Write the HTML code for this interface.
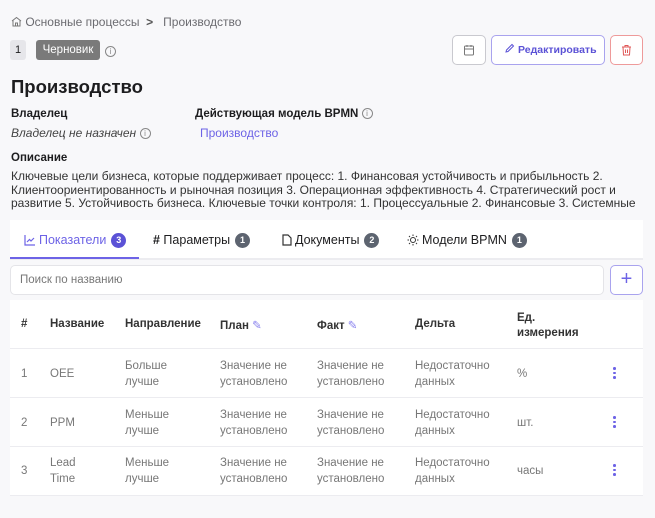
<!DOCTYPE html>
<html><head><meta charset="utf-8"><style>
*{box-sizing:border-box;margin:0;padding:0}
body{width:655px;height:518px;background:#f8f8fa;font-family:"Liberation Sans",sans-serif;color:#1d1d1f;position:relative;overflow:hidden;font-size:12px}
.a{position:absolute;white-space:nowrap}
.g{color:#6b6b70}
.info{display:inline-block;width:11px;height:11px;border:1px solid #888;border-radius:50%;font-size:8px;line-height:9px;text-align:center;color:#888;vertical-align:middle}
.btn{position:absolute;top:35px;height:30px;border-radius:5px;background:#fff}
.badge{display:inline-block;width:15px;height:15px;border-radius:50%;background:#5d6470;color:#fff;font-size:9px;line-height:15px;text-align:center;font-weight:bold;vertical-align:middle;margin-left:5px}
.tab{top:232px;font-size:12.5px;line-height:16px}
.tab svg{vertical-align:-2px;margin-right:3px}
.th{font-weight:bold;font-size:11.5px;color:#333}
.td{color:#777;font-size:11.5px;line-height:16px}
.sep{position:absolute;left:10px;width:633px;height:1px;background:#ececf0}
.dots{position:absolute;left:613px;width:3px}
.dots i{display:block;width:2.5px;height:2.5px;background:#6d63e6;border-radius:50%;margin-bottom:2px}
</style></head><body>
<div class="a g" style="left:11px;top:15px;font-size:12px"><svg width="11" height="11" viewBox="0 0 11 11" style="vertical-align:-1px"><path d="M1 5 L5.5 1.5 L10 5 M2 4.5 V10 H9 V4.5 M4.5 10 V7 H6.5 V10" fill="none" stroke="#777" stroke-width="1"/></svg> Основные процессы &nbsp;<b style="color:#555">&gt;</b>&nbsp;&nbsp; Производство</div>
<div class="a" style="left:10px;top:40px;width:16px;height:20px;background:#e6e6ea;border-radius:3px;font-size:11px;text-align:center;line-height:20px">1</div>
<div class="a" style="left:36px;top:40px;width:64px;height:20px;background:#7a7a7a;border-radius:3px;color:#fff;font-size:11.5px;line-height:20px;text-align:center">Черновик</div>
<div class="a" style="left:105px;top:44px"><span class="info">i</span></div>
<div class="btn" style="left:452px;width:34px;border:1px solid #c9c9cf"><svg width="12" height="12" viewBox="0 0 12 12" style="position:absolute;left:10px;top:8px"><rect x="1.5" y="2" width="9" height="9" rx="1" fill="none" stroke="#777"/><path d="M1.5 5H10.5M4 1V3M8 1V3" stroke="#777"/></svg></div>
<div class="btn" style="left:491px;width:114px;border:1px solid #a9a3ee;color:#5b52d6;font-size:10.5px;font-weight:bold;line-height:28px;padding-left:12px"><svg width="11" height="11" viewBox="0 0 11 11" style="vertical-align:-1px;margin-right:3px"><path d="M2 9L2.5 7L8 1.5L9.5 3L4 8.5Z" fill="none" stroke="#5b52d6"/></svg>Редактировать</div>
<div class="btn" style="left:610px;width:33px;border:1px solid #ee9a9a"><svg width="11" height="12" viewBox="0 0 11 12" style="position:absolute;left:10px;top:8px"><path d="M1 3H10M4 3V1.5H7V3M2 3L2.5 11H8.5L9 3M4.5 5.5V9M6.5 5.5V9" fill="none" stroke="#e05858"/></svg></div>
<div class="a" style="left:11px;top:76px;font-size:18.5px;font-weight:bold">Производство</div>
<div class="a th" style="left:11px;top:108px;color:#1d1d1f">Владелец</div>
<div class="a" style="left:11px;top:126px;font-style:italic;color:#444">Владелец не назначен <span class="info" style="font-style:normal">i</span></div>
<div class="a th" style="left:195px;top:108px;color:#1d1d1f">Действующая модель BPMN <span class="info" style="font-weight:normal">i</span></div>
<div class="a" style="left:200px;top:126px;color:#6d63e6">Производство</div>
<div class="a th" style="left:11px;top:152px;color:#1d1d1f">Описание</div>
<div class="a" style="left:11px;top:170px;line-height:13.5px;font-size:12px;color:#333">Ключевые цели бизнеса, которые поддерживает процесс: 1. Финансовая устойчивость и прибыльность 2.<br>Клиентоориентированность и рыночная позиция 3. Операционная эффективность 4. Стратегический рост и<br>развитие 5. Устойчивость бизнеса. Ключевые точки контроля: 1. Процессуальные 2. Финансовые 3. Системные</div>
<div class="a" style="left:10px;top:220px;width:633px;height:40px;background:#fff;border-bottom:2px solid #ececf0"></div>
<div class="a" style="left:10px;top:257px;width:129px;height:2px;background:#6d63e6"></div>
<div class="a tab" style="left:24px;color:#6d63e6"><svg width="12" height="12" viewBox="0 0 12 12"><path d="M1 1V11H11M3 8L5.5 5.5L7 7L10 4" fill="none" stroke="#6d63e6" stroke-width="1.2"/></svg>Показатели<span class="badge" style="background:#5b52d6">3</span></div>
<div class="a tab" style="left:153px"><b>#</b> Параметры<span class="badge">1</span></div>
<div class="a tab" style="left:282px"><svg width="10" height="12" viewBox="0 0 10 12"><path d="M1 1H6L9 4V11H1Z" fill="none" stroke="#333" stroke-width="1.2"/></svg>Документы<span class="badge">2</span></div>
<div class="a tab" style="left:407px"><svg width="12" height="12" viewBox="0 0 12 12"><circle cx="6" cy="6" r="2.5" fill="none" stroke="#333"/><path d="M6 0.5V2M6 10V11.5M0.5 6H2M10 6H11.5M2 2L3 3M9 9L10 10M2 10L3 9M9 3L10 2" stroke="#333"/></svg>Модели BPMN<span class="badge">1</span></div>
<div class="a" style="left:10px;top:265px;width:594px;height:30px;background:#fff;border:1px solid #e4e4e8;border-radius:5px;color:#777;font-size:11.5px;line-height:28px;padding-left:9px">Поиск по названию</div>
<div class="a" style="left:610px;top:265px;width:33px;height:30px;background:#fff;border:1px solid #a9a3ee;border-radius:5px;color:#6d63e6;font-size:20px;line-height:26px;text-align:center">+</div>
<div class="a" style="left:10px;top:300px;width:633px;height:196px;background:#fff"></div>
<div class="a th" style="left:21px;top:318px">#</div>
<div class="a th" style="left:50px;top:318px">Название</div>
<div class="a th" style="left:125px;top:318px">Направление</div>
<div class="a th" style="left:220px;top:318px">План <span style="color:#8a83ee;font-weight:normal">✎</span></div>
<div class="a th" style="left:317px;top:318px">Факт <span style="color:#8a83ee;font-weight:normal">✎</span></div>
<div class="a th" style="left:415px;top:318px">Дельта</div>
<div class="a th" style="left:517px;top:311px;line-height:15px">Ед.<br>измерения</div>
<div class="sep" style="top:348px"></div>
<div class="sep" style="top:397px"></div>
<div class="sep" style="top:446px"></div>
<div class="sep" style="top:495px"></div>
<div class="a td" style="left:21px;top:366px">1</div><div class="a td" style="left:50px;top:366px">OEE</div>
<div class="a td" style="left:125px;top:358px">Больше<br>лучше</div>
<div class="a td" style="left:220px;top:358px">Значение не<br>установлено</div>
<div class="a td" style="left:317px;top:358px">Значение не<br>установлено</div>
<div class="a td" style="left:415px;top:358px">Недостаточно<br>данных</div>
<div class="a td" style="left:517px;top:366px">%</div>
<div class="dots" style="top:367px"><i></i><i></i><i></i></div>
<div class="a td" style="left:21px;top:415px">2</div><div class="a td" style="left:50px;top:415px">PPM</div>
<div class="a td" style="left:125px;top:407px">Меньше<br>лучше</div>
<div class="a td" style="left:220px;top:407px">Значение не<br>установлено</div>
<div class="a td" style="left:317px;top:407px">Значение не<br>установлено</div>
<div class="a td" style="left:415px;top:407px">Недостаточно<br>данных</div>
<div class="a td" style="left:517px;top:415px">шт.</div>
<div class="dots" style="top:416px"><i></i><i></i><i></i></div>
<div class="a td" style="left:21px;top:463px">3</div><div class="a td" style="left:50px;top:455px">Lead<br>Time</div>
<div class="a td" style="left:125px;top:455px">Меньше<br>лучше</div>
<div class="a td" style="left:220px;top:455px">Значение не<br>установлено</div>
<div class="a td" style="left:317px;top:455px">Значение не<br>установлено</div>
<div class="a td" style="left:415px;top:455px">Недостаточно<br>данных</div>
<div class="a td" style="left:517px;top:463px">часы</div>
<div class="dots" style="top:464px"><i></i><i></i><i></i></div>
</body></html>
